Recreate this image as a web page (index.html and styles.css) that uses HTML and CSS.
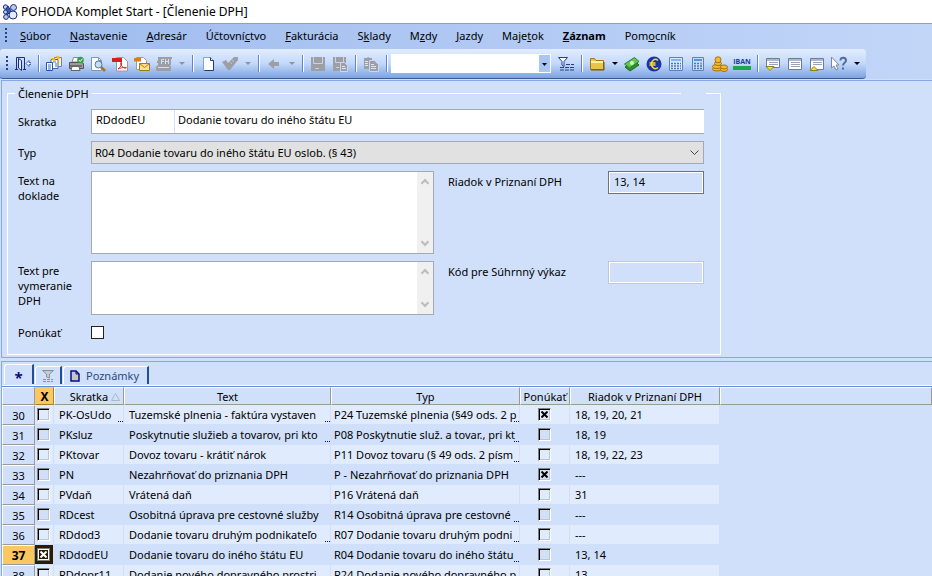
FILE: index.html
```html
<!DOCTYPE html>
<html lang="sk">
<head>
  <meta charset="UTF-8" />
  <meta name="viewport" content="width=device-width, initial-scale=1.0"/>
  <title>POHODA Komplet Start - [Členenie DPH]</title>
  <link rel="stylesheet" href="styles.css">
</head>
<body>
  <header class="titlebar">
    <svg class="logo" viewBox="0 0 16 16" width="16" height="16">
      <g fill="#b9c9ee" stroke="#1c2f7c">
        <circle cx="3.5" cy="3" r="2.2"/><circle cx="11.5" cy="3.5" r="3"/>
        <path d="M6 2l3 5-4 4-3-3z" fill="#3c58b0"/>
        <circle cx="3.500" cy="8" r="2"/><circle cx="4" cy="13" r="2.400"/>
        <circle cx="11" cy="11" r="4" fill="#e4ebfb"/>
      </g>
    </svg>
    <h1>POHODA Komplet Start - [Členenie DPH]</h1>
  </header>

  <nav class="menubar">
    <span class="grip"></span>
    <a href="#"><u>S</u>úbor</a>
    <a href="#"><u>N</u>astavenie</a>
    <a href="#"><u>A</u>dresár</a>
    <a href="#">Účtovní<u>c</u>tvo</a>
    <a href="#"><u>F</u>akturácia</a>
    <a href="#">S<u>k</u>lady</a>
    <a href="#">M<u>z</u>dy</a>
    <a href="#"><u>J</u>azdy</a>
    <a href="#">Maje<u>t</u>ok</a>
    <a href="#" class="current"><u>Z</u>áznam</a>
    <a href="#">Pom<u>o</u>cník</a>
  </nav>

  <div class="toolbar-row">
    <div class="toolbar">
      <span class="grip"></span>
      <button class="tool" aria-label="Koniec">
        <svg viewBox="0 0 16 16"><path d="M1.500 13V1.500h8V13M0 13.500h3M8 13.500h3" fill="none" stroke="#1b2f78"/><path d="M3.500 2.500l3 2v10l-3-2.500z" fill="#dfe9fc" stroke="#1b2f78"/><path d="M11 7.500l3-3v2h2v2h-2v2z" fill="#fff" stroke="#4668b8"/></svg>
      </button>
      <span class="sep"></span>
      <button class="tool" aria-label="Kopírovať agendu">
        <svg viewBox="0 0 16 16"><path d="M8.500 1.500h7v9h-7z" fill="#fff7b0" stroke="#6b7fb8"/><path d="M5 3.500h7v9H5z" fill="#fff" stroke="#4367b0"/><path d="M.5 6.500h6v8h-6z" fill="#fff" stroke="#2457a8"/><path d="M2 9h3M2 11h3M2 13h3M7 6h3M9 8h2M9 10h2" stroke="#3d6fc4"/><path d="M5 2h3l2 3H7zM10 0h3l1 3h-3z" fill="#f2c21c"/></svg>
      </button>
      <button class="tool" aria-label="Tlač">
        <svg viewBox="0 0 16 16"><path d="M4 6l1.500-4.500h6L11 6z" fill="#fff" stroke="#888"/><path d="M1.500 6.500h12l2 1v5h-14z" fill="#9c9c9c" stroke="#555"/><path d="M2 10h12" stroke="#444"/><path d="M4 10.500h7l1 4H3z" fill="#fff" stroke="#666"/><circle cx="12.500" cy="4" r="3.300" fill="#35a046"/><path d="M10.800 4l1.400 1.400 2.300-2.700" fill="none" stroke="#fff"/></svg>
      </button>
      <button class="tool" aria-label="Náhľad">
        <svg viewBox="0 0 16 16"><path d="M1.500 1.500h7l3 3v10h-10z" fill="#fff" stroke="#8094c2"/><path d="M8.500 1.500v3h3" fill="none" stroke="#8094c2"/><circle cx="8.500" cy="8.500" r="3.500" fill="#bfe0f5" stroke="#55779f"/><path d="M11 11l4 4" stroke="#a87420" stroke-width="2.500"/></svg>
      </button>
      <button class="tool" aria-label="Export PDF">
        <svg viewBox="0 0 16 16"><path d="M4.500 1.500h7l4 4v9.500h-11z" fill="#fff" stroke="#9a9a9a"/><path d="M0 2h10v4H0z" fill="#d91e18"/><path d="M6 13c3-2 4-5 3.500-6.500-.5-1-1.500.5-.5 2.500s3 3.500 5 3-2-1.500-8 1z" fill="none" stroke="#d8282a"/></svg>
      </button>
      <button class="tool" aria-label="Odoslať e-mailom">
        <svg viewBox="0 0 16 16"><path d="M2.500 1.500h7l3 3v9h-10z" fill="#fff" stroke="#9a9a9a"/><path d="M0 2h7v3.500H0z" fill="#e07b16"/><path d="M5.500 7.500h10v7h-10z" fill="#ffe08a" stroke="#a8791b"/><path d="M5.500 7.500l5 4 5-4" fill="none" stroke="#a8791b"/></svg>
      </button>
      <button class="tool" aria-label="Fiškálna tlačiareň" disabled>
        <svg viewBox="0 0 16 16"><path d="M2 1h14v2h-1v6h-1l1 2v3l-1 1H1l-1-1v-3l2-2V7H1V5h1z" fill="#9d9fa5"/><path d="M5.500 8V3.500H8M5.500 5.500H8M9.500 3v5M12.500 3v5M9.500 5.500h3M2 11.500h11" fill="none" stroke="#d2dff5"/></svg>
      </button>
      <button class="drop" aria-label="Ďalšie tlačiarne" disabled></button>
      <span class="sep"></span>
      <button class="tool" aria-label="Nový záznam">
        <svg viewBox="0 0 16 16"><path d="M3.500 1.500h7l3 3v10h-10z" fill="#fff" stroke="#7ea4cf"/><path d="M10.500 1.500v3h3v10h-9" fill="none" stroke="#1d3a80"/></svg>
      </button>
      <button class="tool" aria-label="Uložiť" disabled>
        <svg viewBox="0 0 16 16"><path d="M0 6l4-2 2 3 6-6h4v3L8 14H6z" fill="#9d9fa5"/><path d="M10 4l2 2M8 6l2 2" stroke="#b9c4da"/></svg>
      </button>
      <button class="drop" aria-label="Možnosti uloženia" disabled></button>
      <span class="sep"></span>
      <button class="tool" aria-label="Späť" disabled>
        <svg viewBox="0 0 16 16"><path d="M2 8l6-5v3h5v4H8v3z" fill="#9d9fa5"/></svg>
      </button>
      <button class="drop" aria-label="História" disabled></button>
      <span class="sep"></span>
      <button class="tool" aria-label="Uložiť záznam" disabled>
        <svg viewBox="0 0 16 16"><path d="M1 1h14v14H1z" fill="#9d9fa5"/><path d="M3.500 1v6.500h9V1M5 12.500h4" fill="none" stroke="#c3d2ee"/></svg>
      </button>
      <button class="tool" aria-label="Uložiť kópiu" disabled>
        <svg viewBox="0 0 16 16"><path d="M1 1h13v14H1z" fill="#9d9fa5"/><path d="M3.500 1v5.500h8V1M4 11.500h3" fill="none" stroke="#c3d2ee"/><path d="M8.500 6.500h4l3 3v6h-7z" fill="#9d9fa5" stroke="#c9d8f4"/><path d="M10 10.500h3M10 12.500h4" stroke="#dbe6fa"/></svg>
      </button>
      <span class="sep"></span>
      <button class="tool" aria-label="Kopírovať" disabled>
        <svg viewBox="0 0 16 16"><path d="M1 2h3l1-1 2 1h2v11H1z" fill="#9d9fa5"/><path d="M2 5.500h3M2 7.500h3M2 9.500h3" stroke="#dbe6fa"/><path d="M6.500 4.500h5l4 4v7h-9z" fill="#9d9fa5" stroke="#c9d8f4"/><path d="M8 8.500h3M8 10.500h5M8 12.500h5" stroke="#dbe6fa"/></svg>
      </button>
      <span class="sep"></span>
      <select class="quick" aria-label="Rýchly filter"><option></option></select>
      <button class="tool" aria-label="Filter">
        <svg viewBox="0 0 16 16"><path d="M.5 1.500h9l-3.500 4v5l-2-1.500v-3.500z" fill="#fff" stroke="#27407f"/><path d="M2 11.500h14M2 14h14M8 8.500h8" stroke="#27407f" stroke-dasharray="4 1"/></svg>
      </button>
      <span class="sep"></span>
      <button class="tool" aria-label="Dokumenty">
        <svg viewBox="0 0 16 16"><path d="M1.500 13.500v-11h4l1.500 2h7.500v9z" fill="#e9c44b" stroke="#a07816"/><path d="M2 6h12" stroke="#fff2a0" stroke-width="2"/><path d="M2 14h13V6" fill="none" stroke="#6d5210"/></svg>
      </button>
      <button class="drop" aria-label="Priečinky"></button>
      <button class="tool" aria-label="Hotovosť">
        <svg viewBox="0 0 16 16"><path d="M1 11l10-6 4 4-9 6z" fill="#2f8f2b" stroke="#1d6a22"/><path d="M.5 8l10-6.500 4.500 4-9.500 6.500z" fill="#66c653" stroke="#23812a"/><circle cx="8" cy="7" r="2" fill="#d8f5c8"/></svg>
      </button>
      <button class="tool" aria-label="Kurzy mien">
        <svg viewBox="0 0 16 16"><circle cx="8" cy="8" r="7.500" fill="#1635a8"/><path d="M12 4.500C9 2 5.500 4 5.500 8s3.500 6 6.500 3.500M3.500 7h6M3.500 9h6" fill="none" stroke="#ffdb2e" stroke-width="1.500"/></svg>
      </button>
      <button class="tool" aria-label="Plánovač">
        <svg viewBox="0 0 16 16"><path d="M1.500 1.500h13v13h-13z" fill="#d9e8fb" stroke="#5c82bd"/><path d="M3 4h10" stroke="#8fb2e6" stroke-width="2"/><path d="M3 7.500h10M3 10h10M3 12.500h10" stroke="#4d76b8" stroke-width="1.500" stroke-dasharray="2 1"/></svg>
      </button>
      <button class="tool" aria-label="Kalkulačka">
        <svg viewBox="0 0 16 16"><path d="M2.500 1.500h11v13h-11z" fill="#c9def7" stroke="#5c82bd"/><path d="M4 4h8" stroke="#4f94dd" stroke-width="2"/><path d="M4 7.500h8M4 10h8M4 12.500h8" stroke="#4d76b8" stroke-width="1.500" stroke-dasharray="2 1"/><path d="M10 7.500h2" stroke="#e58a1c" stroke-width="1.500"/></svg>
      </button>
      <button class="tool" aria-label="Pokladňa">
        <svg viewBox="0 0 16 16"><g fill="#f4bd2f" stroke="#a86f0d"><ellipse cx="5" cy="13" rx="4.500" ry="2"/><ellipse cx="5" cy="10.500" rx="4.500" ry="2"/><ellipse cx="6" cy="7.500" rx="3.500" ry="2"/><ellipse cx="6" cy="3.800" rx="3" ry="3"/><ellipse cx="12" cy="13.500" rx="3.500" ry="2"/><ellipse cx="12" cy="11" rx="3.500" ry="2"/></g></svg>
      </button>
      <button class="tool" aria-label="IBAN">
        <span class="iban">IBAN</span>
      </button>
      <span class="sep"></span>
      <button class="tool" aria-label="Dolný panel">
        <svg viewBox="0 0 16 16"><path d="M1.500 2.500h13v9h-13z" fill="#fff" stroke="#6f7c93"/><path d="M2 4h12" stroke="#a9b9d6" stroke-width="2"/><path d="M4 6.500h9M4 8.500h9" stroke="#98a2b5"/><path d="M1 10.500h8l-4 4z" fill="#f5e12d" stroke="#8b8420"/></svg>
      </button>
      <button class="tool" aria-label="Celý panel">
        <svg viewBox="0 0 16 16"><path d="M1.500 2.500h13v11h-13z" fill="#fff" stroke="#6f7c93"/><path d="M2 4h12" stroke="#a9b9d6" stroke-width="2"/><path d="M4 6.500h9M4 8.500h9M4 10.500h9" stroke="#98a2b5"/></svg>
      </button>
      <button class="tool" aria-label="Horný panel">
        <svg viewBox="0 0 16 16"><path d="M1.500 2.500h13v11h-13z" fill="#fff" stroke="#6f7c93"/><path d="M2 4h12" stroke="#a9b9d6" stroke-width="2"/><path d="M4 6.500h9M4 8.500h9" stroke="#98a2b5"/><path d="M1 14.500h8l-4-4z" fill="#f5e12d" stroke="#8b8420"/></svg>
      </button>
      <button class="tool" aria-label="Pomocník">
        <svg viewBox="0 0 16 16"><path d="M.5 1v11l2.500-2 2 4 2-1-2-4h3z" fill="#fff" stroke="#7d889c"/><path d="M9.500 4.500c0-4 5.500-3.500 5.500 0 0 2.500-3 2-3 5M12 11.500v2" fill="none" stroke="#4f6c96" stroke-width="2"/></svg>
      </button>
      <button class="drop" aria-label="Možnosti panela"></button>
    </div>
  </div>

  <main class="workspace">
    <form class="panel">
      <fieldset class="group">
        <legend>Členenie DPH</legend>
        <label for="skratka">Skratka</label>
        <div class="pair">
          <input type="text" id="skratka" value="RDdodEU">
          <input type="text" id="nazov" aria-label="Názov" value="Dodanie tovaru do iného štátu EU">
        </div>

        <label for="typ">Typ</label>
        <select id="typ">
          <option>R04 Dodanie tovaru do iného štátu EU oslob. (§ 43)</option>
        </select>

        <label for="doklad" class="top">Text na<br>doklade</label>
        <div class="memo tall">
          <textarea id="doklad"></textarea>
          <span class="scroll"><i></i><i></i></span>
        </div>
        <label for="riadok" class="side">Riadok v Priznaní DPH</label>
        <input type="text" id="riadok" class="code" value="13, 14" readonly>

        <label for="vymeranie" class="top">Text pre<br>vymeranie<br>DPH</label>
        <div class="memo">
          <textarea id="vymeranie"></textarea>
          <span class="scroll"><i></i><i></i></span>
        </div>
        <label for="kod" class="side">Kód pre Súhrnný výkaz</label>
        <input type="text" id="kod" class="code" disabled>

        <label for="ponukat">Ponúkať</label>
        <input type="checkbox" id="ponukat" class="box">
      </fieldset>
    </form>

    <section class="panel list">
      <div class="tabs">
        <button class="tab active">*</button>
        <button class="tab" aria-label="Filter">
          <svg viewBox="0 0 12 14" width="12" height="14"><path d="M.5 1.500h11L7.500 5v4l-3-1V5z" fill="#c6cbd4" stroke="#8b8f98"/><path d="M1 10.500h10M1 12.500h10" stroke="#8b8f98" stroke-dasharray="3 1"/></svg>
        </button>
        <button class="tab notes">
          <svg viewBox="0 0 10 12" width="10" height="12"><path d="M1 1h5l3 3v7H1z" fill="#c4c6cc" stroke="#0b0b80" stroke-width="1.500"/><path d="M6 1v3h3" fill="none" stroke="#0b0b80"/></svg>
          Poznámky
        </button>
      </div>
      <table class="grid">
        <colgroup>
          <col class="c-num"><col class="c-mark"><col class="c-code"><col class="c-text"><col class="c-type"><col class="c-offer"><col class="c-line"><col>
        </colgroup>
        <thead>
          <tr>
            <th></th>
            <th class="mark">X</th>
            <th class="sorted">Skratka <svg viewBox="0 0 9 8" width="9" height="8"><path d="M4.500.5L.5 7.500h8z" fill="none" stroke="#a9b6cc"/></svg></th>
            <th>Text</th>
            <th>Typ</th>
            <th>Ponúkať</th>
            <th>Riadok v Priznaní DPH</th>
            <th></th>
          </tr>
        </thead>
        <tbody>
          <tr>
            <th>30</th>
            <td><input type="checkbox" aria-label="Označiť 30"></td>
            <td class="more">PK-OsUdo</td>
            <td class="more">Tuzemské plnenia - faktúra vystaven</td>
            <td class="more">P24 Tuzemské plnenia (§49 ods. 2 p</td>
            <td><input type="checkbox" aria-label="Ponúkať 30" checked></td>
            <td>18, 19, 20, 21</td>
            <td></td>
          </tr>
          <tr>
            <th>31</th>
            <td><input type="checkbox" aria-label="Označiť 31"></td>
            <td>PKsluz</td>
            <td class="more">Poskytnutie služieb a tovarov, pri kto</td>
            <td class="more">P08 Poskytnutie služ. a tovar., pri kt</td>
            <td><input type="checkbox" aria-label="Ponúkať 31"></td>
            <td>18, 19</td>
            <td></td>
          </tr>
          <tr>
            <th>32</th>
            <td><input type="checkbox" aria-label="Označiť 32"></td>
            <td>PKtovar</td>
            <td>Dovoz tovaru - krátiť nárok</td>
            <td class="more">P11 Dovoz tovaru (§ 49 ods. 2 písm</td>
            <td><input type="checkbox" aria-label="Ponúkať 32"></td>
            <td>18, 19, 22, 23</td>
            <td></td>
          </tr>
          <tr>
            <th>33</th>
            <td><input type="checkbox" aria-label="Označiť 33"></td>
            <td>PN</td>
            <td>Nezahrňovať do priznania DPH</td>
            <td>P - Nezahrňovať do priznania DPH</td>
            <td><input type="checkbox" aria-label="Ponúkať 33" checked></td>
            <td>---</td>
            <td></td>
          </tr>
          <tr>
            <th>34</th>
            <td><input type="checkbox" aria-label="Označiť 34"></td>
            <td>PVdaň</td>
            <td>Vrátená daň</td>
            <td>P16 Vrátená daň</td>
            <td><input type="checkbox" aria-label="Ponúkať 34"></td>
            <td>31</td>
            <td></td>
          </tr>
          <tr>
            <th>35</th>
            <td><input type="checkbox" aria-label="Označiť 35"></td>
            <td>RDcest</td>
            <td>Osobitná úprava pre cestovné služby</td>
            <td class="more">R14 Osobitná úprava pre cestovné</td>
            <td><input type="checkbox" aria-label="Ponúkať 35"></td>
            <td>---</td>
            <td></td>
          </tr>
          <tr>
            <th>36</th>
            <td><input type="checkbox" aria-label="Označiť 36"></td>
            <td>RDdod3</td>
            <td class="more">Dodanie tovaru druhým podnikateľo</td>
            <td class="more">R07 Dodanie tovaru druhým podni</td>
            <td><input type="checkbox" aria-label="Ponúkať 36"></td>
            <td>---</td>
            <td></td>
          </tr>
          <tr class="selected">
            <th>37</th>
            <td><input type="checkbox" aria-label="Označiť 37" checked></td>
            <td>RDdodEU</td>
            <td>Dodanie tovaru do iného štátu EU</td>
            <td class="more">R04 Dodanie tovaru do iného štátu</td>
            <td><input type="checkbox" aria-label="Ponúkať 37"></td>
            <td>13, 14</td>
            <td></td>
          </tr>
          <tr>
            <th>38</th>
            <td><input type="checkbox" aria-label="Označiť 38"></td>
            <td>RDdopr11</td>
            <td class="more">Dodanie nového dopravného prostri</td>
            <td class="more">R24 Dodanie nového dopravného p</td>
            <td><input type="checkbox" aria-label="Ponúkať 38"></td>
            <td>13</td>
            <td></td>
          </tr>
        </tbody>
      </table>
    </section>
  </main>
</body>
</html>
```
FILE: styles.css
```css
* {
  margin: 0;
  padding: 0;
  box-sizing: border-box;
}

body {
  height: 100vh;
  display: flex;
  flex-direction: column;
  overflow: hidden;
  background: #d0e0fa;
  color: #000;
  font: 11px/15px "Noto Sans", "Open Sans", sans-serif;
}

button,
input,
select,
textarea {
  font: inherit;
  color: inherit;
  border: none;
  border-radius: 0;
  outline: none;
  background: none;
  appearance: none;
}

/* title, menu and toolbar */
.titlebar {
  display: flex;
  align-items: center;
  gap: 3px;
  height: 24px;
  padding-left: 2px;
  background: #fff;
  border-bottom: 1px solid #9a9ea8;
}

.titlebar h1 {
  font-size: 12px;
  font-weight: 400;
}

.menubar {
  display: flex;
  align-items: center;
  gap: 19px;
  height: 25px;
  padding: 0 0 2px 5px;
  background: linear-gradient(90deg, #9ebbee, #c2d6f8);
}

.menubar a {
  color: inherit;
  text-decoration: none;
}

.menubar .grip {
  margin-right: -7px;
}

.menubar .current {
  font-weight: 700;
}

.grip {
  width: 3px;
  height: 15px;
  background: repeating-linear-gradient(#27407f 0 2px, transparent 2px 4px) left / 2px 100% no-repeat;
}

.toolbar-row {
  display: flex;
  background: linear-gradient(90deg, #9ebbee, #c2d6f8);
}

.toolbar {
  display: flex;
  align-items: center;
  height: 30px;
  padding: 0 3px 0 6px;
  border-bottom: 1px solid #3b5a92;
  border-radius: 3px 4px 4px 3px;
  background: linear-gradient(#e2edff, #c3d8fa 50%, #7ca3e2);
}

.tool {
  display: flex;
  align-items: center;
  justify-content: center;
  width: 22px;
  height: 22px;
}

.toolbar .grip + .tool {
  margin-left: 3px;
}

.tool svg {
  width: 16px;
  height: 16px;
}

.drop {
  display: flex;
  justify-content: center;
  width: 13px;
}

.drop::after {
  content: "";
  border: 3px solid transparent;
  border-top-color: #000;
  border-bottom: none;
}

.drop:disabled::after {
  border-top-color: #8f939c;
}

.sep {
  width: 2px;
  height: 17px;
  margin: 0 3px 0 4px;
  background: linear-gradient(90deg, #6384c4 50%, #fff 50%);
}

.quick {
  width: 160px;
  height: 19px;
  margin-right: 4px;
  border: 1px solid #fff;
  background: #fff url("data:image/svg+xml,%3Csvg xmlns='http://www.w3.org/2000/svg' width='11' height='17'%3E%3Cpath fill='%23a9c5f3' d='M0 0h11v17H0z'/%3E%3Cpath d='M3 8h5L5.500 11z'/%3E%3C/svg%3E") right / 11px 17px no-repeat;
}

.iban {
  color: #1b3f94;
  font: 700 7px/9px "Open Sans", sans-serif;
  border-bottom: 4px solid #1ea545;
}

/* record form */
.workspace {
  flex: 1;
  display: flex;
  flex-direction: column;
  gap: 3px;
  min-height: 0;
  padding: 1px 0 0 1px;
}

.panel {
  border: 1px solid #86a9e6;
  border-right: none;
}

form.panel {
  padding: 5px 5px 2px;
}

.group {
  position: relative;
  display: grid;
  grid-template-columns: 73px 343px 1fr 96px;
  gap: 7px 0;
  max-width: 714px;
  padding: 8px 16px 11px 10px;
  border: 1px solid #fff;
}

/* opening in the top edge of the frame */
.group::after {
  content: "";
  position: absolute;
  top: -9px;
  right: 14px;
  width: 25px;
  height: 3px;
  background: #d0e0fa;
}

.group legend {
  margin-left: -3px;
  padding: 0 3px;
}

.group label {
  align-self: center;
}

.group .top {
  align-self: start;
  padding-top: 2px;
}

.group .side {
  align-self: start;
  padding: 3px 0 0 14px;
}

.pair,
#typ {
  grid-column: 2 / -1;
}

.pair {
  display: flex;
  height: 25px;
  border: 1px solid #a4a9b3;
  border-right: none;
  background: #fff;
}

.pair input {
  flex: 1;
  min-width: 0;
  padding: 0 3px 4px;
}

.pair input:first-child {
  flex: 0 0 83px;
  padding-left: 4px;
  border-right: 1px solid #d0e0fa;
}

#typ {
  height: 23px;
  padding-left: 3px;
  border: 1px solid #a4a9b3;
  background: #e1e1e1 url("data:image/svg+xml,%3Csvg xmlns='http://www.w3.org/2000/svg' width='9' height='6'%3E%3Cpath d='M.5.5l4 4 4-4' fill='none' stroke='%23444'/%3E%3C/svg%3E") right 4px center no-repeat;
}

.memo {
  display: flex;
  height: 54px;
  border: 1px solid #a4a9b3;
  background: #fff;
}

.memo.tall {
  height: 83px;
}

.memo textarea {
  flex: 1;
  min-width: 0;
  resize: none;
}

.scroll {
  display: flex;
  flex-direction: column;
  justify-content: space-between;
  align-items: center;
  width: 16px;
  padding: 8px 0;
  background: #f0f0f0;
}

.scroll i {
  width: 6px;
  height: 6px;
  border: solid #bcbcbc;
  border-width: 2px 0 0 2px;
  transform: rotate(45deg);
}

.scroll i:last-child {
  transform: rotate(225deg);
}

.code {
  height: 23px;
  padding: 0 5px 2px;
  border: 1px solid #6f7278;
  box-shadow: inset 0 0 0 1px #fff;
}

.code:disabled {
  border-color: #c4c8d0;
}

.box {
  width: 13px;
  height: 13px;
  margin: 4px 0;
  border: 1px solid #222;
  background: #fff;
}

/* record list */
.list {
  flex: 1;
  min-height: 0;
  overflow: hidden;
  border-bottom: none;
}

.tabs {
  display: flex;
  align-items: flex-end;
  gap: 1px;
  height: 25px;
  padding: 0 0 2px 2px;
  border-bottom: 1px solid #5c8bd2;
  box-shadow: inset 0 -1px #fff;
}

.tab {
  display: flex;
  align-items: center;
  justify-content: center;
  gap: 6px;
  width: 27px;
  height: 18px;
  border: 1px solid #fff;
  border-width: 1px 2px 0 1px;
  border-right-color: #24508f;
  border-radius: 3px 0 0 0;
  color: #2a4a80;
}

.tab.active {
  width: 30px;
  height: 20px;
  padding-top: 4px;
  color: #0b0b80;
  font-weight: 700;
  font-size: 15px;
  line-height: 10px;
}

.tab.notes {
  width: auto;
  padding: 0 8px 0 6px;
}

.grid {
  width: 100%;
  table-layout: fixed;
  border-collapse: separate;
  border-spacing: 0;
}

.c-num { width: 33px; }
.c-mark { width: 19px; }
.c-code { width: 70px; }
.c-text { width: 207px; }
.c-type { width: 189px; }
.c-offer { width: 50px; }
.c-line { width: 150px; }

.grid th {
  height: 20px;
  font-weight: 400;
  white-space: nowrap;
  border: 1px solid #fff;
  border-right-color: #9a9a9a;
  border-bottom-color: #9a9a9a;
}

.grid thead th {
  height: 18px;
}

.grid thead .mark,
.grid .selected th {
  background: #fbc760;
  font-weight: 700;
  font-size: 12px;
}

.grid thead .mark {
  border-color: #fbc760 #a87f35 #a87f35 #fbc760;
}

.grid .sorted {
  padding-right: 3px;
  text-align: right;
}

.grid td {
  position: relative;
  padding: 0 0 0 5px;
  overflow: hidden;
  white-space: nowrap;
  border: 0 solid #d0e0fa;
  border-width: 0 1px 1px 0;
}

.grid td:nth-child(5) {
  padding-left: 3px;
}

.grid tbody tr:nth-child(odd) td:not(:last-child) {
  background: #e0ebfe;
}

/* dots where the value is longer than the column */
.more::after {
  content: "";
  position: absolute;
  right: 0;
  bottom: 2px;
  width: 5px;
  border-bottom: 1px dotted #0b0b80;
}

.grid input {
  display: block;
  width: 13px;
  height: 13px;
  margin: 0 auto;
  border: 1px solid #808080;
  border-right-color: #fff;
  border-bottom-color: #fff;
  box-shadow: inset 1px 1px #000, inset -1px -1px #c0c4cc;
}

.grid td:nth-child(2) {
  padding: 0 1px 0 0;
}

.grid td:nth-child(6) {
  padding: 0;
}

.grid input:checked {
  background: url("data:image/svg+xml,%3Csvg xmlns='http://www.w3.org/2000/svg' width='7' height='7'%3E%3Cpath d='M.5.5l6 6M6.500.5l-6 6' stroke='%23000' stroke-width='2'/%3E%3C/svg%3E") center no-repeat;
}

.grid .selected td:nth-child(2) {
  background: #2b1d05;
}

.grid .selected td:nth-child(2) input {
  border-color: #777;
  box-shadow: inset 0 0 0 1px #fff;
  background: url("data:image/svg+xml,%3Csvg xmlns='http://www.w3.org/2000/svg' width='7' height='7'%3E%3Cpath d='M.5.5l6 6M6.500.5l-6 6' stroke='%23fff' stroke-width='2'/%3E%3C/svg%3E") center no-repeat;
}
```
